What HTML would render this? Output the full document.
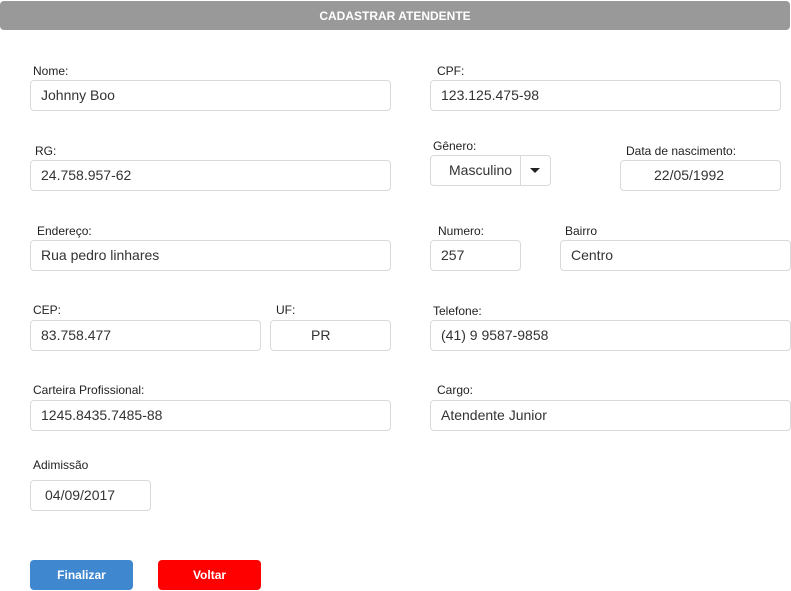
<!DOCTYPE html>
<html><head><meta charset="utf-8"><style>
body{margin:0;width:791px;height:591px;background:#fff;font-family:"Liberation Sans",Arial,sans-serif;position:relative;overflow:hidden}
.h{position:absolute;left:0;top:1px;width:790px;height:29px;background:#999;border-radius:4px;color:#fff;font-weight:bold;font-size:12px;text-align:center;line-height:30px}
.l{position:absolute;font-size:12px;color:#222}
.i{position:absolute;height:29px;border:1px solid #d9d9d9;border-radius:4px;box-sizing:border-box;height:31px;font-size:14px;color:#333;line-height:29px;padding-left:10px}
.b{position:absolute;top:560px;width:103px;height:30px;border-radius:4px;color:#fff;font-weight:bold;font-size:12px;text-align:center;line-height:30px}
</style></head><body>
<div class="h">CADASTRAR ATENDENTE</div>
<div class="l" style="left:33px;top:64px">Nome:</div>
<div class="i" style="left:30px;top:80px;width:361px">Johnny Boo</div>
<div class="l" style="left:437px;top:64px">CPF:</div>
<div class="i" style="left:430px;top:80px;width:351px">123.125.475-98</div>
<div class="l" style="left:35px;top:144px">RG:</div>
<div class="i" style="left:30px;top:160px;width:361px">24.758.957-62</div>
<div class="l" style="left:433px;top:139px">Gênero:</div>
<div class="i" style="left:430px;top:155px;width:121px;padding-left:18px">Masculino<div style="position:absolute;left:89px;top:0;width:1px;height:29px;background:#d9d9d9"></div><div style="position:absolute;left:99px;top:12px;border-left:5px solid transparent;border-right:5px solid transparent;border-top:5px solid #222"></div></div>
<div class="l" style="left:626px;top:144px">Data de nascimento:</div>
<div class="i" style="left:620px;top:160px;width:161px;padding-left:33px">22/05/1992</div>
<div class="l" style="left:37px;top:224px">Endereço:</div>
<div class="i" style="left:30px;top:240px;width:361px">Rua pedro linhares</div>
<div class="l" style="left:438px;top:224px">Numero:</div>
<div class="i" style="left:430px;top:240px;width:91px">257</div>
<div class="l" style="left:565px;top:224px">Bairro</div>
<div class="i" style="left:560px;top:240px;width:231px">Centro</div>
<div class="l" style="left:33px;top:303px">CEP:</div>
<div class="i" style="left:30px;top:320px;width:231px">83.758.477</div>
<div class="l" style="left:276px;top:303px">UF:</div>
<div class="i" style="left:270px;top:320px;width:121px;padding-left:40px">PR</div>
<div class="l" style="left:433px;top:304px">Telefone:</div>
<div class="i" style="left:430px;top:320px;width:361px">(41) 9 9587-9858</div>
<div class="l" style="left:33px;top:383px">Carteira Profissional:</div>
<div class="i" style="left:30px;top:400px;width:361px">1245.8435.7485-88</div>
<div class="l" style="left:437px;top:383px">Cargo:</div>
<div class="i" style="left:430px;top:400px;width:361px">Atendente Junior</div>
<div class="l" style="left:33px;top:458px">Adimissão</div>
<div class="i" style="left:30px;top:480px;width:121px;padding-left:14px">04/09/2017</div>
<div class="b" style="left:30px;background:#3f88d0">Finalizar</div>
<div class="b" style="left:158px;background:#ff0000">Voltar</div>
</body></html>
